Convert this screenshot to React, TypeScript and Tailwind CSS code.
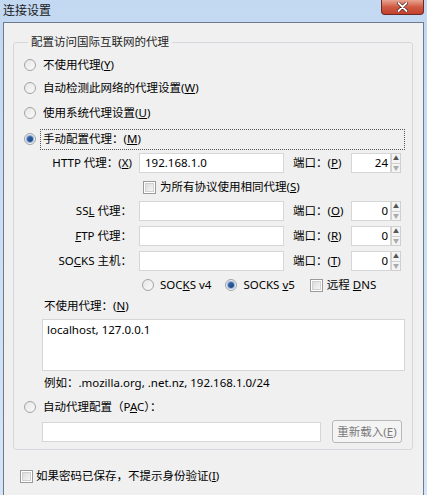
import React from "react";

const FONT = { fontFamily: '"Noto Sans", "Noto Sans CJK SC", sans-serif' };

function Radio({ checked = false }: { checked?: boolean }) {
  return (
    <span className="flex h-[12px] w-[12px] shrink-0 items-center justify-center rounded-full border border-[#a3a3a3] bg-gradient-to-br from-[#e6e6e6] to-[#fafafa]">
      {checked && <span className="h-[6px] w-[6px] rounded-full bg-gradient-to-br from-[#3a6fb7] to-[#1a3f7a] ring-1 ring-[#8fb4e4]" />}
    </span>
  );
}

function Check() {
  return (
    <span className="flex h-[13px] w-[13px] shrink-0 items-center justify-center border border-[#9a9a9a] bg-white">
      <span className="h-[9px] w-[9px] border border-[#d0d0d0] bg-gradient-to-br from-[#dcdcdc] to-[#f6f6f6]" />
    </span>
  );
}

function Spin({ value }: { value: string }) {
  return (
    <div className="ml-[9px] flex h-[20px] items-stretch">
      <div className="flex w-[40px] items-center justify-end border border-[#d6d6d6] bg-white pr-[2px]">{value}</div>
      <div className="flex w-[10px] flex-col">
        <div className="flex flex-1 items-center justify-center border border-[#d0d0d0] bg-[#f4f4f4] text-[6px] leading-none text-[#555]">▲</div>
        <div className="flex flex-1 items-center justify-center border border-t-0 border-[#d0d0d0] bg-[#f4f4f4] text-[6px] leading-none text-[#aaa]">▼</div>
      </div>
    </div>
  );
}

function ProxyRow({ label, value, portKey, port, top }: { label: React.ReactNode; value?: string; portKey: string; port: string; top: string }) {
  return (
    <div className={`flex h-[20px] items-center ${top}`}>
      <div className="w-[108px] whitespace-nowrap text-right">{label}</div>
      <div className="ml-[7px] flex h-[20px] w-[145px] items-center border border-[#d6d6d6] bg-white pl-[5px]">{value}</div>
      <div className="ml-[9px] w-[49px] whitespace-nowrap">
        端口：(<u>{portKey}</u>)
      </div>
      <Spin value={port} />
    </div>
  );
}

export default function App() {
  return (
    <div className="h-[495px] w-[427px] overflow-hidden bg-gradient-to-b from-[#c3d8f1] to-[#d6e5f5] text-[11.5px] leading-[16px] text-black" style={FONT}>
      {/* title bar */}
      <div className="flex h-[22px] items-start justify-between">
        <span className="ml-[3px] mt-[3px] text-[12px] text-[#1a1a1a]">连接设置</span>
        <div className="mr-[3px] flex h-[15px] w-[43px] items-center justify-center rounded-b-[4px] border border-t-0 border-[#6b2a25] bg-gradient-to-b from-[#e8a493] via-[#cf5a43] to-[#c2412c]">
          <svg width="11" height="10" viewBox="0 0 11 10">
            <path d="M1.5 1 L9.5 9 M9.5 1 L1.5 9" stroke="#4a1a14" strokeWidth="3.2" strokeLinecap="round" />
            <path d="M1.5 1 L9.5 9 M9.5 1 L1.5 9" stroke="#ffffff" strokeWidth="1.8" strokeLinecap="round" />
          </svg>
        </div>
      </div>

      {/* dialog body */}
      <div className="mx-[3px] h-[473px] border border-b-0 border-[#6b7c91] bg-[#f0f0f0]">
        <fieldset className="ml-[9px] mr-[10px] mt-[11px] rounded-[3px] border border-[#d5d9dd] pb-[6px] pl-[10px] pr-[7px] pt-[4px]">
          <legend className="ml-[4px] px-[3px] text-[#1e1e1e]">配置访问国际互联网的代理</legend>

          <div className="flex h-[22px] items-center gap-[7px]">
            <Radio />
            <span>不使用代理(<u>Y</u>)</span>
          </div>
          <div className="mt-[1px] flex h-[22px] items-center gap-[7px]">
            <Radio />
            <span>自动检测此网络的代理设置(<u>W</u>)</span>
          </div>
          <div className="mt-[3px] flex h-[22px] items-center gap-[7px]">
            <Radio />
            <span>使用系统代理设置(<u>U</u>)</span>
          </div>
          <div className="mt-[4px] flex h-[22px] items-center gap-[4px]">
            <Radio checked />
            <span className="flex h-[21px] flex-1 items-center border border-dotted border-[#555] pl-[2px]">
              手动配置代理：(<u>M</u>)
            </span>
          </div>

          <ProxyRow top="mt-[3px]" label={<>HTTP 代理：(<u>X</u>)</>} value="192.168.1.0" portKey="P" port="24" />

          <div className="mt-[4px] flex h-[20px] items-center pl-[119px]">
            <Check />
            <span className="ml-[4px]">为所有协议使用相同代理(<u>S</u>)</span>
          </div>

          <ProxyRow top="mt-[4px]" label={<>SS<u>L</u> 代理：</>} portKey="O" port="0" />
          <ProxyRow top="mt-[5px]" label={<><u>F</u>TP 代理：</>} portKey="R" port="0" />
          <ProxyRow top="mt-[5px]" label={<>SO<u>C</u>KS 主机：</>} portKey="T" port="0" />

          <div className="mt-[4px] flex h-[20px] items-center pl-[118px]">
            <Radio />
            <span className="ml-[6px]">SOC<u>K</u>S v4</span>
            <span className="ml-[14px]">
              <Radio checked />
            </span>
            <span className="ml-[6px]">SOCKS <u>v</u>5</span>
            <span className="ml-[15px]">
              <Check />
            </span>
            <span className="ml-[4px]">远程 <u>D</u>NS</span>
          </div>

          <div className="mt-[3px] pl-[20px]">不使用代理：(<u>N</u>)</div>
          <div className="ml-[18px] mt-[5px] h-[52px] border border-[#d6d6d6] bg-white px-[4px] pt-[2px]">localhost, 127.0.0.1</div>
          <div className="mt-[4px] pl-[20px]">例如：.mozilla.org, .net.nz, 192.168.1.0/24</div>

          <div className="mt-[7px] flex h-[18px] items-center gap-[7px]">
            <Radio />
            <span>自动代理配置（P<u>A</u>C）：</span>
          </div>
          <div className="mt-[4px] flex h-[23px] items-center pl-[18px]">
            <div className="h-[20px] w-[279px] border border-[#d6d6d6] bg-white" />
            <div className="ml-[11px] flex h-[23px] w-[70px] items-center justify-center rounded-[3px] border border-[#b8b8b8] bg-[#f4f4f4] text-[#7a7a7a]">
              重新载入(<u>E</u>)
            </div>
          </div>
        </fieldset>

        <div className="ml-[16px] mt-[18px] flex h-[16px] items-center">
          <Check />
          <span className="ml-[3px]">如果密码已保存，不提示身份验证(<u>I</u>)</span>
        </div>
      </div>
    </div>
  );
}
